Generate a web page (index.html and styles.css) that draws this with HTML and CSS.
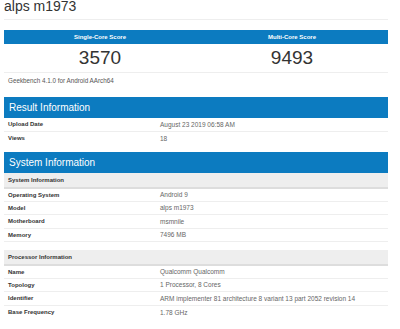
FILE: index.html
```html
<!DOCTYPE html>
<html lang="en">
<head>
    <meta charset="UTF-8">
    <meta name="viewport" content="width=device-width, initial-scale=1.0">
    <title>alps m1973 - Geekbench Browser</title>
    <link rel="stylesheet" href="styles.css">
</head>
<body>
    <div class="page">
        <div class="page-header">
            <h1>alps m1973</h1>
        </div>

        <table class="scores">
            <thead>
                <tr>
                    <th>Single-Core Score</th>
                    <th>Multi-Core Score</th>
                </tr>
            </thead>
            <tbody>
                <tr>
                    <td>3570</td>
                    <td>9493</td>
                </tr>
            </tbody>
        </table>
        <p class="version">Geekbench 4.1.0 for Android AArch64</p>

        <table class="info">
            <thead>
                <tr><th colspan="2" class="section">Result Information</th></tr>
            </thead>
            <tbody>
                <tr><td class="name">Upload Date</td><td class="value">August 23 2019 06:58 AM</td></tr>
                <tr><td class="name">Views</td><td class="value">18</td></tr>
            </tbody>
        </table>

        <table class="info">
            <thead>
                <tr><th colspan="2" class="section">System Information</th></tr>
            </thead>
            <tbody>
                <tr><th colspan="2" class="group">System Information</th></tr>
                <tr><td class="name">Operating System</td><td class="value">Android 9</td></tr>
                <tr><td class="name">Model</td><td class="value">alps m1973</td></tr>
                <tr><td class="name">Motherboard</td><td class="value">msmnile</td></tr>
                <tr><td class="name">Memory</td><td class="value">7496 MB</td></tr>
                <tr class="spacer"><td colspan="2"></td></tr>
                <tr><th colspan="2" class="group">Processor Information</th></tr>
                <tr><td class="name">Name</td><td class="value">Qualcomm Qualcomm</td></tr>
                <tr><td class="name">Topology</td><td class="value">1 Processor, 8 Cores</td></tr>
                <tr><td class="name">Identifier</td><td class="value">ARM implementer 81 architecture 8 variant 13 part 2052 revision 14</td></tr>
                <tr><td class="name">Base Frequency</td><td class="value">1.78 GHz</td></tr>
            </tbody>
        </table>
    </div>
</body>
</html>
```

FILE: styles.css
```css
* {
    margin: 0;
    padding: 0;
    box-sizing: border-box;
}

body {
    background-color: #fff;
    font-family: "Liberation Sans", Arial, Helvetica, sans-serif;
    color: #333;
    overflow: hidden;
}

.page {
    width: 384px;
    margin-left: 4px;
}

.page-header {
    margin-top: -2px;
    height: 22px;
    border-bottom: 1px solid #eee;
}

.page-header h1 {
    font-size: 14px;
    font-weight: normal;
    line-height: 16px;
    color: #333;
}

table {
    width: 100%;
    border-collapse: collapse;
}

.scores {
    margin-top: 10px;
}

.scores th {
    width: 50%;
    height: 14px;
    background-color: #0c7bc0;
    color: #fff;
    font-size: 6px;
    font-weight: bold;
    text-align: center;
}

.scores td {
    height: 28px;
    font-size: 19px;
    text-align: center;
    color: #333;
    border-bottom: 1px solid #eee;
    padding-top: 1px;
}

.version {
    font-size: 6.3px;
    color: #555;
    padding: 4px 0 0 4px;
    line-height: 7px;
}

.info {
    margin-top: 13px;
}

.info + .info {
    margin-top: 7px;
}

.section {
    height: 21px;
    background-color: #0c7bc0;
    color: #fff;
    font-size: 10px;
    font-weight: normal;
    text-align: left;
    padding-left: 5px;
}

.info tbody tr + tr td {
    border-top: 1px solid #eee;
}

.info td {
    height: 13.5px;
    font-size: 6px;
    vertical-align: middle;
}

.info .name {
    width: 156px;
    padding-left: 4px;
    font-weight: bold;
    color: #333;
}

.info .value {
    font-size: 6.5px;
    color: #666;
}

.group {
    height: 15px;
    background-color: #eee;
    border-bottom: 2px solid #ddd;
    font-size: 6px;
    font-weight: bold;
    text-align: left;
    padding-left: 4px;
    color: #333;
}

.info tbody tr.spacer td {
    height: 8px;
    border-top: 1px solid #eee;
}

.info tbody tr.spacer + tr td,
.info tbody .group + td {
    border-top: none;
}
```
